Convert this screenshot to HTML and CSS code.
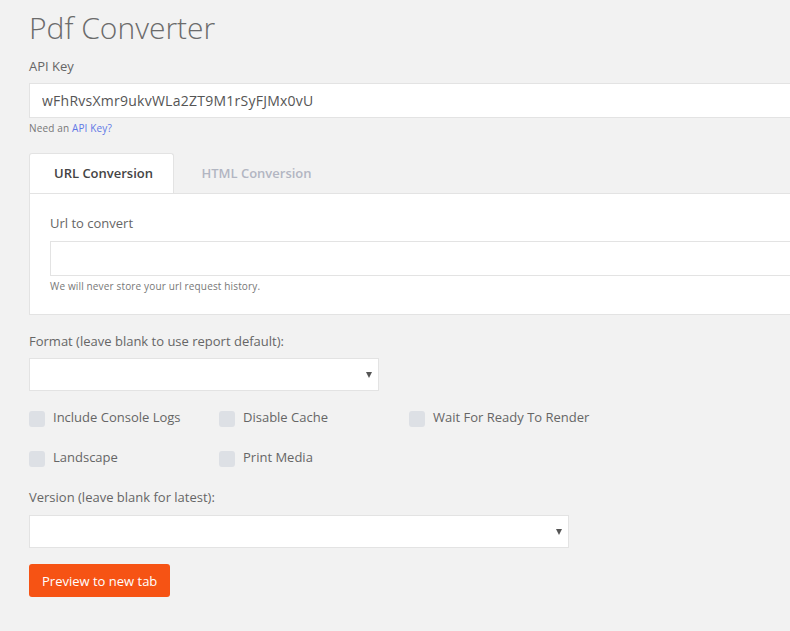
FILE: index.html
```
<!DOCTYPE html>
<html>
<head>
<meta charset="utf-8">
<link rel="stylesheet" href="styles.css">
</head>
<body>
<div class="page">
  <h1 class="title">Pdf Converter</h1>
  <div class="field">
    <label class="label">API Key</label>
    <input class="input key" type="text" value="wFhRvsXmr9ukvWLa2ZT9M1rSyFJMx0vU">
    <div class="help">Need an <a href="#">API Key?</a></div>
  </div>
  <div class="tabs">
    <div class="tab active">URL Conversion</div>
    <div class="tab">HTML Conversion</div>
  </div>
  <div class="panel">
    <label class="label">Url to convert</label>
    <input class="input" type="text">
    <div class="help">We will never store your url request history.</div>
  </div>
  <div class="field format">
    <label class="label">Format (leave blank to use report default):</label>
    <div class="select w350"><span class="arrow"></span></div>
  </div>
  <div class="checks">
    <div class="check"><span class="box"></span>Include Console Logs</div>
    <div class="check"><span class="box"></span>Disable Cache</div>
    <div class="check"><span class="box"></span>Wait For Ready To Render</div>
    <div class="check"><span class="box"></span>Landscape</div>
    <div class="check"><span class="box"></span>Print Media</div>
  </div>
  <div class="field version">
    <label class="label">Version (leave blank for latest):</label>
    <div class="select w540"><span class="arrow"></span></div>
  </div>
  <button class="btn">Preview to new tab</button>
</div>
</body>
</html>
```
FILE: styles.css
```
html, body { margin: 0; padding: 0; }
body {
  background: #f2f2f2;
  font-family: "Open Sans", sans-serif;
  color: #666;
  overflow: hidden;
  width: 790px;
  height: 631px;
}
.page {
  padding: 0 0 0 29px;
  width: 800px;
}
.title {
  margin: 0;
  padding-top: 8px;
  font-size: 30px;
  font-weight: 300;
  line-height: 40px;
  color: #6b6b6b;
}
.label {
  display: block;
  font-size: 13px;
  line-height: 18px;
  color: #666;
}
.field { margin-top: 9px; }
.field .label { margin-bottom: 8px; }
.input {
  display: block;
  box-sizing: border-box;
  width: 100%;
  height: 35px;
  margin: 0;
  padding: 0 12px;
  border: 1px solid #e3e3e3;
  background: #fff;
  font-family: "Open Sans", sans-serif;
  font-size: 14px;
  color: #555;
  outline: none;
}
.input.key { letter-spacing: 0.25px; }
.help {
  font-size: 10px;
  letter-spacing: 0.15px;
  line-height: 13px;
  margin-top: 4px;
  color: #777;
}
.help a { color: #5f78e6; text-decoration: none; }
.tabs {
  display: flex;
  margin-top: 18px;
  height: 40px;
}
.tab {
  box-sizing: border-box;
  width: 145px;
  text-align: center;
  font-size: 13px;
  font-weight: 600;
  line-height: 40px;
  color: #b2b6c2;
  padding-left: 4px;
}
.tab.active {
  background: #fff;
  color: #444;
  border: 1px solid #e3e3e3;
  border-bottom: none;
  border-radius: 3px 3px 0 0;
  line-height: 38px;
}
.tab + .tab { width: 165px; padding-left: 0; }
.panel {
  background: #fff;
  border: 1px solid #e3e3e3;
  padding: 20px 0 20px 20px;
  height: 80px;
}
.panel .label { margin-bottom: 9px; font-size: 13px; }
.format { margin-top: 17px; }
.select {
  position: relative;
  box-sizing: border-box;
  height: 33px;
  background: #fff;
  border: 1px solid #e3e3e3;
}
.w350 { width: 350px; }
.w540 { width: 540px; }
.arrow {
  position: absolute;
  right: 6px;
  top: 13px;
  width: 0; height: 0;
  border-left: 3px solid transparent;
  border-right: 3px solid transparent;
  border-top: 6px solid #555;
}
.checks {
  display: grid;
  grid-template-columns: repeat(3, 190px);
  row-gap: 21px;
  margin-top: 17px;
}
.check {
  display: flex;
  align-items: flex-start;
  font-size: 13px;
  line-height: 18px;
  color: #666;
}
.box {
  width: 16px; height: 16px;
  border-radius: 3px;
  background: #dde0e5;
  margin-right: 8px;
  margin-top: 3px;
  flex: none;
}
.version { margin-top: 21px; }
.version .label { margin-bottom: 9px; }
.btn {
  display: block;
  margin-top: 16px;
  height: 33px;
  padding: 0 13px;
  border: none;
  border-radius: 3px;
  background: #f65314;
  color: #fff;
  font-family: "Open Sans", sans-serif;
  font-size: 13px;
}
```
